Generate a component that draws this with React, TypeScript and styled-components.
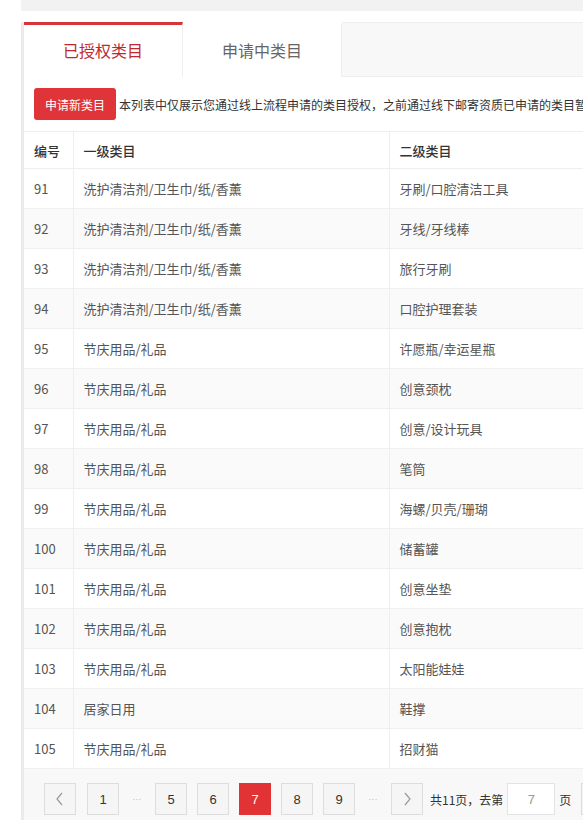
import styled, { createGlobalStyle } from "styled-components";

const GlobalStyle = createGlobalStyle`
  html, body {
    margin: 0;
    padding: 0;
    background: #fff;
    overflow: hidden;
  }
  body {
    font-family: "Noto Sans CJK SC", "Liberation Sans", sans-serif;
    color: #333;
  }
  * { box-sizing: border-box; }
`;

interface Row {
  id: number;
  first: string;
  second: string;
}

const WASH = "洗护清洁剂/卫生巾/纸/香薰";
const FEST = "节庆用品/礼品";

const rows: Row[] = [
  { id: 91, first: WASH, second: "牙刷/口腔清洁工具" },
  { id: 92, first: WASH, second: "牙线/牙线棒" },
  { id: 93, first: WASH, second: "旅行牙刷" },
  { id: 94, first: WASH, second: "口腔护理套装" },
  { id: 95, first: FEST, second: "许愿瓶/幸运星瓶" },
  { id: 96, first: FEST, second: "创意颈枕" },
  { id: 97, first: FEST, second: "创意/设计玩具" },
  { id: 98, first: FEST, second: "笔筒" },
  { id: 99, first: FEST, second: "海螺/贝壳/珊瑚" },
  { id: 100, first: FEST, second: "储蓄罐" },
  { id: 101, first: FEST, second: "创意坐垫" },
  { id: 102, first: FEST, second: "创意抱枕" },
  { id: 103, first: FEST, second: "太阳能娃娃" },
  { id: 104, first: "居家日用", second: "鞋撑" },
  { id: 105, first: FEST, second: "招财猫" },
];

type PageItem = { kind: "page"; n: number } | { kind: "gap" };

const pages: PageItem[] = [
  { kind: "page", n: 1 },
  { kind: "gap" },
  { kind: "page", n: 5 },
  { kind: "page", n: 6 },
  { kind: "page", n: 7 },
  { kind: "page", n: 8 },
  { kind: "page", n: 9 },
  { kind: "gap" },
];

export default function App() {
  return (
    <>
      <GlobalStyle />
      <Page>
        <TopStrip />
        <Card>
          <TabBar>
            <Tab $active>已授权类目</Tab>
            <Tab>申请中类目</Tab>
            <TabFiller />
          </TabBar>

          <Toolbar>
            <ApplyButton>申请新类目</ApplyButton>
            <Notice>
              本列表中仅展示您通过线上流程申请的类目授权，之前通过线下邮寄资质已申请的类目暂不在此展示
            </Notice>
          </Toolbar>

          <Table>
            <colgroup>
              <col style={{ width: 49 }} />
              <col style={{ width: 316 }} />
              <col />
            </colgroup>
            <thead>
              <tr>
                <Th>编号</Th>
                <Th>一级类目</Th>
                <Th>二级类目</Th>
              </tr>
            </thead>
            <tbody>
              {rows.map((r, i) => (
                <Tr key={r.id} $striped={i % 2 === 1}>
                  <Td>{r.id}</Td>
                  <Td>{r.first}</Td>
                  <Td>{r.second}</Td>
                </Tr>
              ))}
            </tbody>
          </Table>

          <Pager>
            <PageBtn $first>
              <svg width="10" height="14" viewBox="0 0 10 14">
                <path d="M7 1 L2 7 L7 13" fill="none" stroke="#999" strokeWidth="1.2" />
              </svg>
            </PageBtn>
            {pages.map((p, i) =>
              p.kind === "gap" ? (
                <Ellipsis key={"g" + i}>···</Ellipsis>
              ) : (
                <PageBtn key={p.n} $active={p.n === 7}>
                  {p.n}
                </PageBtn>
              )
            )}
            <PageBtn>
              <svg width="10" height="14" viewBox="0 0 10 14">
                <path d="M3 1 L8 7 L3 13" fill="none" stroke="#999" strokeWidth="1.2" />
              </svg>
            </PageBtn>
            <JumpGroup>
              <PagerText>共11页，去第</PagerText>
              <JumpInput defaultValue="7" />
              <PagerText>页</PagerText>
            </JumpGroup>
            <ConfirmBtn>确定</ConfirmBtn>
          </Pager>
        </Card>
      </Page>
    </>
  );
}

const Page = styled.div`
  width: 900px;
  padding-left: 21px;
`;

const TopStrip = styled.div`
  height: 11px;
  background: #f2f2f2;
`;

const Card = styled.div`
  margin-top: 11px;
  border-left: 3px solid #ebebeb;
  background: #fff;
`;

const TabBar = styled.div`
  display: flex;
  height: 55px;
  border-top: 1px solid #eee;
  border-bottom: 1px solid #eee;
`;

const Tab = styled.div<{ $active?: boolean }>`
  width: 159px;
  display: flex;
  align-items: center;
  justify-content: center;
  font-size: 16px;
  background: #fff;
  color: ${(p) => (p.$active ? "#c1272d" : "#666")};
  border-right: 1px solid #eee;
  border-top: 3px solid ${(p) => (p.$active ? "#d6343a" : "transparent")};
  margin-top: -1px;
  margin-bottom: -1px;
  padding-bottom: 3px;
`;

const TabFiller = styled.div`
  flex: 1;
  background: #f8f8f8;
`;

const Toolbar = styled.div`
  display: flex;
  align-items: center;
  gap: 3px;
  height: 54px;
  padding: 0 10px;
`;

const ApplyButton = styled.button`
  height: 32px;
  width: 82px;
  border: none;
  border-radius: 3px;
  background: #df3538;
  color: #fff;
  font-family: inherit;
  font-size: 12px;
  padding: 0;
  cursor: pointer;
`;

const Notice = styled.span`
  font-size: 12px;
  color: #333;
  white-space: nowrap;
`;

const Table = styled.table`
  width: 100%;
  border-collapse: collapse;
  table-layout: fixed;
  font-size: 13px;
`;

const Th = styled.th`
  height: 37px;
  text-align: left;
  font-weight: 500;
  color: #333;
  padding: 0 10px;
  border-top: 1px solid #eee;
  border-bottom: 1px solid #eee;
  border-right: 1px solid #eee;
`;

const Tr = styled.tr<{ $striped?: boolean }>`
  background: ${(p) => (p.$striped ? "#fafafa" : "#fff")};
`;

const Td = styled.td`
  height: 40px;
  padding: 0 10px;
  color: #555;
  border-bottom: 1px solid #f0f0f0;
  border-right: 1px solid #eee;
  white-space: nowrap;
`;

const Pager = styled.div`
  display: flex;
  align-items: center;
  gap: 10px;
  height: 60px;
  padding: 0 20px;
  background: #f8f8f8;
`;

const PageBtn = styled.div<{ $active?: boolean; $first?: boolean }>`
  width: 32px;
  height: 32px;
  display: flex;
  align-items: center;
  justify-content: center;
  font-family: "Liberation Sans", sans-serif;
  font-size: 13px;
  margin-right: ${(p) => (p.$first ? "1px" : "0")};
  color: ${(p) => (p.$active ? "#fff" : "#333")};
  background: ${(p) => (p.$active ? "#e13335" : "#f5f5f5")};
  border: 1px solid ${(p) => (p.$active ? "#e13335" : "#ddd")};
`;

const Ellipsis = styled.span`
  width: 16px;
  text-align: center;
  color: #bbb;
  font-family: "Liberation Sans", sans-serif;
  font-size: 9px;
`;

const JumpGroup = styled.div`
  display: flex;
  align-items: center;
  gap: 4px;
  margin-left: -3px;
`;

const PagerText = styled.span`
  font-size: 12px;
  color: #333;
  white-space: nowrap;
`;

const JumpInput = styled.input`
  width: 48px;
  height: 32px;
  border: 1px solid #e3e3e3;
  background: #fff;
  text-align: center;
  font-family: "Liberation Sans", sans-serif;
  font-size: 13px;
  color: #999;
  outline: none;
`;

const ConfirmBtn = styled.div`
  height: 32px;
  padding: 0 12px;
  display: flex;
  align-items: center;
  border: 1px solid #ddd;
  background: #f5f5f5;
  font-size: 12px;
  color: #333;
`;
